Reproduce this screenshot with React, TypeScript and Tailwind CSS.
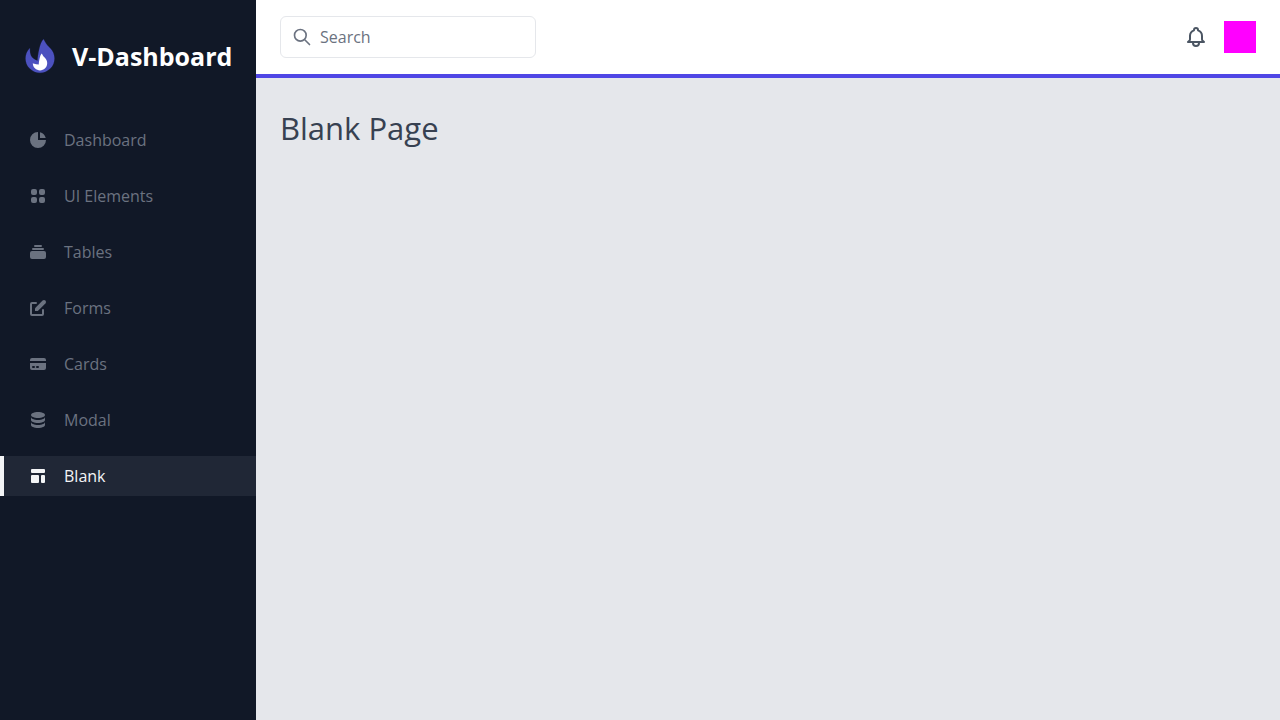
import React from 'react'

type NavItem = { label: string; paths: string[]; active?: boolean }

const navItems: NavItem[] = [
  {
    label: 'Dashboard',
    paths: ['M2 10a8 8 0 018-8v8h8a8 8 0 11-16 0z', 'M12 2.252A8.014 8.014 0 0117.748 8H12V2.252z'],
  },
  {
    label: 'UI Elements',
    paths: [
      'M5 3a2 2 0 00-2 2v2a2 2 0 002 2h2a2 2 0 002-2V5a2 2 0 00-2-2H5zM5 11a2 2 0 00-2 2v2a2 2 0 002 2h2a2 2 0 002-2v-2a2 2 0 00-2-2H5zM11 5a2 2 0 012-2h2a2 2 0 012 2v2a2 2 0 01-2 2h-2a2 2 0 01-2-2V5zM11 13a2 2 0 012-2h2a2 2 0 012 2v2a2 2 0 01-2 2h-2a2 2 0 01-2-2v-2z',
    ],
  },
  {
    label: 'Tables',
    paths: [
      'M7 3a1 1 0 000 2h6a1 1 0 100-2H7zM4 7a1 1 0 011-1h10a1 1 0 110 2H5a1 1 0 01-1-1zM2 11a2 2 0 012-2h12a2 2 0 012 2v4a2 2 0 01-2 2H4a2 2 0 01-2-2v-4z',
    ],
  },
  {
    label: 'Forms',
    paths: [
      'M17.414 2.586a2 2 0 00-2.828 0L7 10.172V13h2.828l7.586-7.586a2 2 0 000-2.828z',
      'M2 6a2 2 0 012-2h4a1 1 0 010 2H4v10h10v-4a1 1 0 112 0v4a2 2 0 01-2 2H4a2 2 0 01-2-2V6z',
    ],
  },
  {
    label: 'Cards',
    paths: [
      'M4 4a2 2 0 00-2 2v1h16V6a2 2 0 00-2-2H4z',
      'M18 9H2v5a2 2 0 002 2h12a2 2 0 002-2V9zM4 13a1 1 0 011-1h1a1 1 0 110 2H5a1 1 0 01-1-1zm5-1a1 1 0 100 2h1a1 1 0 100-2H9z',
    ],
  },
  {
    label: 'Modal',
    paths: [
      'M3 12v3c0 1.657 3.134 3 7 3s7-1.343 7-3v-3c0 1.657-3.134 3-7 3s-7-1.343-7-3z',
      'M3 7v3c0 1.657 3.134 3 7 3s7-1.343 7-3V7c0 1.657-3.134 3-7 3S3 8.657 3 7z',
      'M17 5c0 1.657-3.134 3-7 3S3 6.657 3 5s3.134-3 7-3 7 1.343 7 3z',
    ],
  },
  {
    label: 'Blank',
    active: true,
    paths: [
      'M3 4a1 1 0 011-1h12a1 1 0 011 1v2a1 1 0 01-1 1H4a1 1 0 01-1-1V4zM3 10a1 1 0 011-1h6a1 1 0 011 1v6a1 1 0 01-1 1H4a1 1 0 01-1-1v-6zM14 9a1 1 0 00-1 1v6a1 1 0 001 1h2a1 1 0 001-1v-6a1 1 0 00-1-1h-2z',
    ],
  },
]

function Logo() {
  return (
    <svg className="h-12 w-12 shrink-0" viewBox="0 0 512 512" fill="none" aria-hidden="true">
      <path
        d="M364.61 390.213C304.625 450.196 207.37 450.196 147.386 390.213C117.394 360.22 102.398 320.911 102.398 281.6C102.398 242.291 117.394 202.981 147.386 172.989C147.386 230.4 153.6 281.6 230.4 307.2C230.4 256 256 102.4 294.4 76.7999C320 128 334.618 142.997 364.608 172.989C394.601 202.981 409.597 242.291 409.597 281.6C409.597 320.911 394.601 360.22 364.61 390.213Z"
        fill="#4C51BF"
        stroke="#4C51BF"
        strokeWidth="2"
      />
      <path
        d="M201.694 387.105C231.686 417.098 280.312 417.098 310.305 387.105C325.301 372.109 332.8 352.456 332.8 332.8C332.8 313.144 325.301 293.491 310.305 278.495C295.309 263.498 288 256 275.2 230.4C256 243.2 243.201 320 243.201 345.6C201.694 345.6 179.2 332.8 179.2 332.8C179.2 352.456 186.698 372.109 201.694 387.105Z"
        fill="white"
      />
    </svg>
  )
}

function Sidebar() {
  return (
    <aside className="w-64 shrink-0 bg-[#111827]">
      <div className="mt-8 flex items-center px-4">
        <Logo />
        <span className="mx-2 text-[25px] leading-8 font-bold whitespace-nowrap text-white">V-Dashboard</span>
      </div>
      <nav className="mt-10 flex flex-col gap-4">
        {navItems.map((item) => (
          <a
            key={item.label}
            href="#"
            aria-current={item.active ? 'page' : undefined}
            className={
              item.active
                ? 'flex items-center gap-4 border-l-4 border-[#f3f4f6] bg-[#202736] px-6 py-2 text-[#f3f4f6]'
                : 'flex items-center gap-4 border-l-4 border-[#111827] px-6 py-2 text-[#6b7280]'
            }
          >
            <svg className="h-5 w-5" viewBox="0 0 20 20" fill="currentColor" fillRule="evenodd" aria-hidden="true">
              {item.paths.map((d) => (
                <path key={d} d={d} />
              ))}
            </svg>
            <span className="text-base leading-6">{item.label}</span>
          </a>
        ))}
      </nav>
    </aside>
  )
}

function Header() {
  return (
    <header className="flex items-center justify-between border-b-4 border-[#4f46e5] bg-white px-6 py-4">
      <label className="flex w-64 items-center gap-2 rounded-md border border-[#e5e7eb] px-3 py-2 pl-[11px]">
        <svg className="h-5 w-5 shrink-0 text-[#6b7280]" viewBox="0 0 24 24" fill="none" aria-hidden="true">
          <path
            d="M21 21L15 15M17 10C17 13.866 13.866 17 10 17C6.13401 17 3 13.866 3 10C3 6.13401 6.13401 3 10 3C13.866 3 17 6.13401 17 10Z"
            stroke="currentColor"
            strokeWidth="2"
            strokeLinecap="round"
            strokeLinejoin="round"
          />
        </svg>
        <input
          type="text"
          placeholder="Search"
          aria-label="Search"
          className="h-6 w-full min-w-0 bg-transparent text-base leading-6 text-[#374151] outline-none placeholder:text-[#6b7280]"
        />
      </label>
      <div className="flex items-center gap-4">
        <button type="button" aria-label="Notifications" className="text-[#4b5563]">
          <svg className="h-6 w-6" viewBox="0 0 24 24" fill="none" aria-hidden="true">
            <path
              d="M15 17H20L18.5951 15.5951C18.2141 15.2141 18 14.6973 18 14.1585V11C18 8.38757 16.3304 6.16509 14 5.34142V5C14 3.89543 13.1046 3 12 3C10.8954 3 10 3.89543 10 5V5.34142C7.66962 6.16509 6 8.38757 6 11V14.1585C6 14.6973 5.78595 15.2141 5.40493 15.5951L4 17H9M15 17V18C15 19.6569 13.6569 21 12 21C10.3431 21 9 19.6569 9 18V17M15 17H9"
              stroke="currentColor"
              strokeWidth="2"
              strokeLinecap="round"
              strokeLinejoin="round"
            />
          </svg>
        </button>
        <button type="button" aria-label="Account" className="h-8 w-8 bg-[#ff00ff]" />
      </div>
    </header>
  )
}

export default function App() {
  return (
    <div className="flex min-h-screen bg-[#e5e7eb] font-['Open_Sans','Noto_Sans',sans-serif]">
      <Sidebar />
      <div className="flex min-w-0 flex-1 flex-col">
        <Header />
        <main className="flex-1 px-6 py-8">
          <h1 className="text-[31px] leading-9 text-[#374151]">Blank Page</h1>
        </main>
      </div>
    </div>
  )
}
